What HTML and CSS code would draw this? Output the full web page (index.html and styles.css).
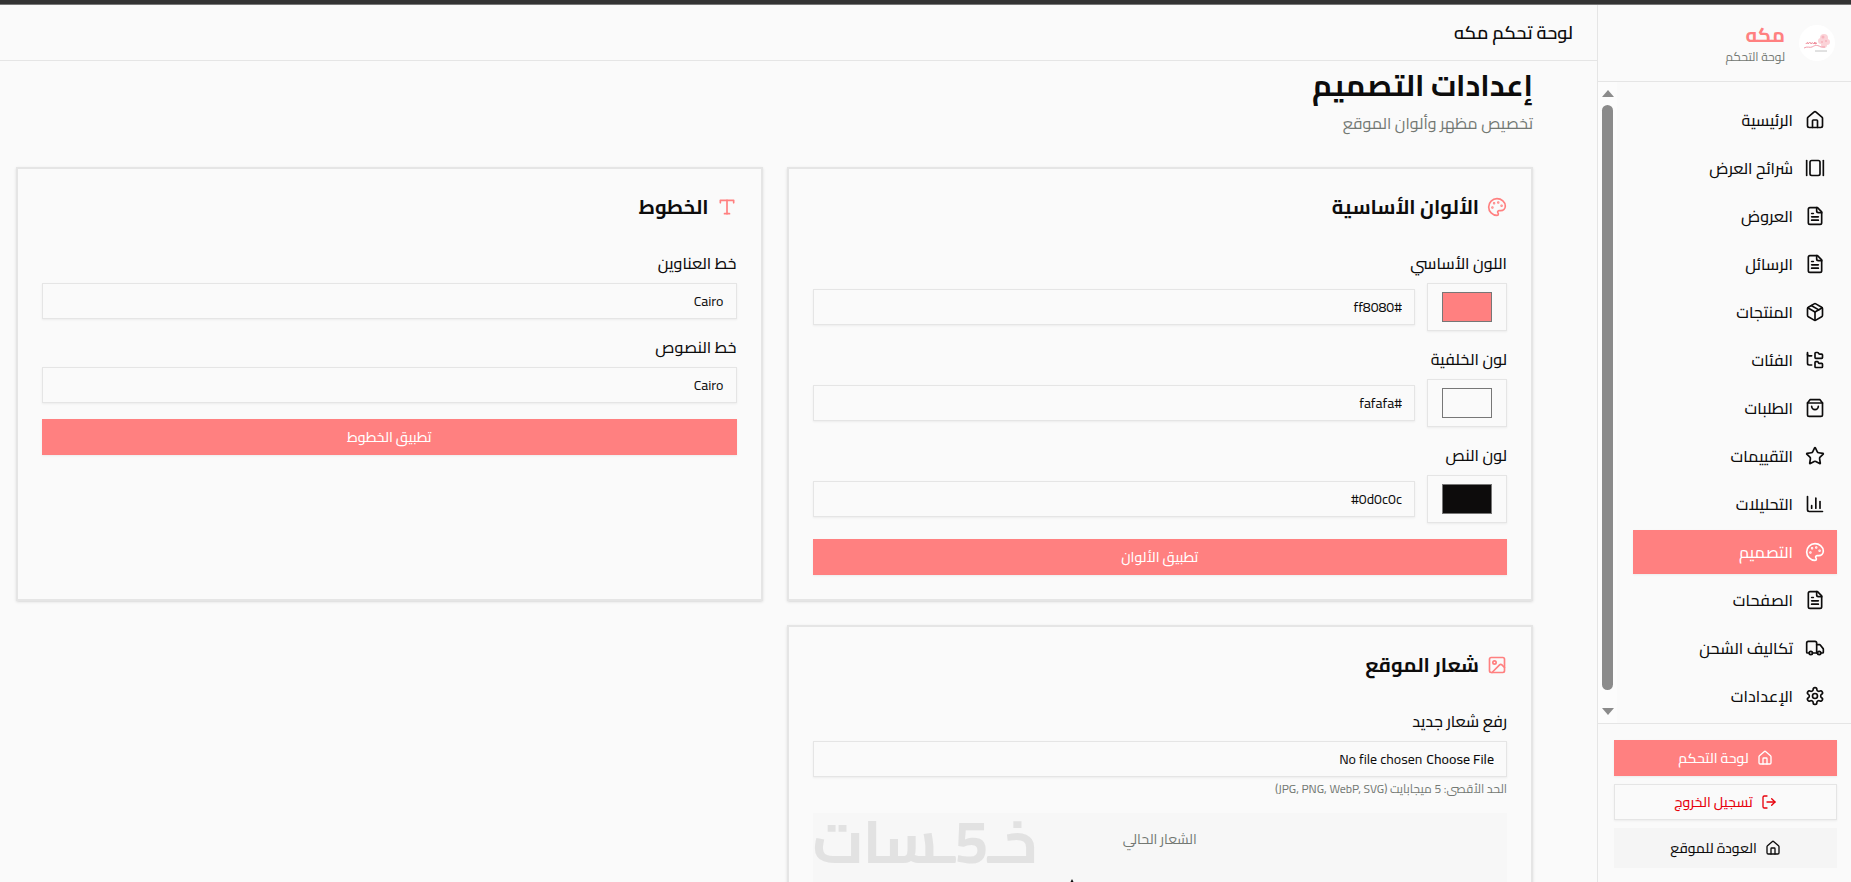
FILE: index.html
```html
<!DOCTYPE html>
<html lang="ar" dir="rtl">
<head>
<meta charset="utf-8">
<title>لوحة تحكم مكه</title>
<link rel="stylesheet" href="styles.css">
</head>
<body>
<svg class="sprite" aria-hidden="true">
  <symbol id="house" viewBox="0 0 24 24"><path d="M15 21v-8a1 1 0 0 0-1-1h-4a1 1 0 0 0-1 1v8"/><path d="M3 10a2 2 0 0 1 .709-1.528l7-5.999a2 2 0 0 1 2.582 0l7 5.999A2 2 0 0 1 21 10v9a2 2 0 0 1-2 2H5a2 2 0 0 1-2-2z"/></symbol>
  <symbol id="slides" viewBox="0 0 24 24"><path d="M2 3v18"/><rect width="12" height="18" x="6" y="3" rx="2"/><path d="M22 3v18"/></symbol>
  <symbol id="file" viewBox="0 0 24 24"><path d="M15 2H6a2 2 0 0 0-2 2v16a2 2 0 0 0 2 2h12a2 2 0 0 0 2-2V7Z"/><path d="M14 2v4a2 2 0 0 0 2 2h4"/><path d="M10 9H8"/><path d="M16 13H8"/><path d="M16 17H8"/></symbol>
  <symbol id="box" viewBox="0 0 24 24"><path d="M11 21.73a2 2 0 0 0 2 0l7-4A2 2 0 0 0 21 16V8a2 2 0 0 0-1-1.73l-7-4a2 2 0 0 0-2 0l-7 4A2 2 0 0 0 3 8v8a2 2 0 0 0 1 1.73z"/><path d="M12 22V12"/><path d="m3.3 7 8.7 5 8.7-5"/><path d="m7.5 4.27 9 5.15"/></symbol>
  <symbol id="tree" viewBox="0 0 24 24"><path d="M20 10a1 1 0 0 0 1-1V6a1 1 0 0 0-1-1h-2.5a1 1 0 0 1-.8-.4l-.9-1.2A1 1 0 0 0 15 3h-2a1 1 0 0 0-1 1v5a1 1 0 0 0 1 1Z"/><path d="M20 21a1 1 0 0 0 1-1v-3a1 1 0 0 0-1-1h-2.900a1 1 0 0 1-.88-.55l-.42-.85a1 1 0 0 0-.92-.6H13a1 1 0 0 0-1 1v5a1 1 0 0 0 1 1Z"/><path d="M3 5a2 2 0 0 0 2 2h3"/><path d="M3 3v13a2 2 0 0 0 2 2h3"/></symbol>
  <symbol id="bag" viewBox="0 0 24 24"><path d="M6 2 3 6v14a2 2 0 0 0 2 2h14a2 2 0 0 0 2-2V6l-3-4Z"/><path d="M3 6h18"/><path d="M16 10a4 4 0 0 1-8 0"/></symbol>
  <symbol id="star" viewBox="0 0 24 24"><path d="M11.525 2.295a.53.53 0 0 1 .95 0l2.310 4.679a2.123 2.123 0 0 0 1.595 1.160l5.166.756a.53.53 0 0 1 .294.904l-3.736 3.638a2.123 2.123 0 0 0-.611 1.878l.882 5.140a.53.53 0 0 1-.771.560l-4.618-2.428a2.122 2.122 0 0 0-1.973 0L6.396 21.010a.53.53 0 0 1-.770-.560l.881-5.139a2.122 2.122 0 0 0-.611-1.879L2.160 9.795a.53.53 0 0 1 .294-.906l5.165-.755a2.122 2.122 0 0 0 1.597-1.160z"/></symbol>
  <symbol id="chart" viewBox="0 0 24 24"><path d="M3 3v16a2 2 0 0 0 2 2h16"/><path d="M18 17V9"/><path d="M13 17V5"/><path d="M8 17v-3"/></symbol>
  <symbol id="palette" viewBox="0 0 24 24"><circle cx="13.500" cy="6.500" r=".5" fill="currentColor"/><circle cx="17.500" cy="10.500" r=".5" fill="currentColor"/><circle cx="8.500" cy="7.500" r=".5" fill="currentColor"/><circle cx="6.500" cy="12.500" r=".5" fill="currentColor"/><path d="M12 2C6.500 2 2 6.500 2 12s4.500 10 10 10c.926 0 1.648-.746 1.648-1.688 0-.437-.180-.835-.437-1.125-.290-.289-.438-.652-.438-1.125a1.640 1.640 0 0 1 1.668-1.668h1.996c3.051 0 5.555-2.503 5.555-5.554C21.965 6.012 17.461 2 12 2z"/></symbol>
  <symbol id="truck" viewBox="0 0 24 24"><path d="M14 18V6a2 2 0 0 0-2-2H4a2 2 0 0 0-2 2v11a1 1 0 0 0 1 1h2"/><path d="M15 18H9"/><path d="M19 18h2a1 1 0 0 0 1-1v-3.650a1 1 0 0 0-.22-.624l-3.480-4.350A1 1 0 0 0 17.520 8H14"/><circle cx="17" cy="18" r="2"/><circle cx="7" cy="18" r="2"/></symbol>
  <symbol id="gear" viewBox="0 0 24 24"><path d="M12.220 2h-.44a2 2 0 0 0-2 2v.18a2 2 0 0 1-1 1.730l-.43.25a2 2 0 0 1-2 0l-.15-.08a2 2 0 0 0-2.730.73l-.22.38a2 2 0 0 0 .73 2.730l.15.1a2 2 0 0 1 1 1.720v.51a2 2 0 0 1-1 1.740l-.15.09a2 2 0 0 0-.73 2.730l.22.38a2 2 0 0 0 2.730.73l.15-.08a2 2 0 0 1 2 0l.43.25a2 2 0 0 1 1 1.730V20a2 2 0 0 0 2 2h.44a2 2 0 0 0 2-2v-.18a2 2 0 0 1 1-1.730l.43-.25a2 2 0 0 1 2 0l.15.08a2 2 0 0 0 2.730-.73l.22-.39a2 2 0 0 0-.73-2.730l-.15-.08a2 2 0 0 1-1-1.740v-.5a2 2 0 0 1 1-1.740l.15-.09a2 2 0 0 0 .73-2.730l-.22-.38a2 2 0 0 0-2.730-.73l-.15.08a2 2 0 0 1-2 0l-.43-.25a2 2 0 0 1-1-1.730V4a2 2 0 0 0-2-2z"/><circle cx="12" cy="12" r="3"/></symbol>
  <symbol id="logout" viewBox="0 0 24 24"><path d="M9 21H5a2 2 0 0 1-2-2V5a2 2 0 0 1 2-2h4"/><path d="m16 17 5-5-5-5"/><path d="M21 12H9"/></symbol>
  <symbol id="type" viewBox="0 0 24 24"><path d="M4 7V4h16v3"/><path d="M9 20h6"/><path d="M12 4v16"/></symbol>
  <symbol id="image" viewBox="0 0 24 24"><rect width="18" height="18" x="3" y="3" rx="2"/><circle cx="9" cy="9" r="2"/><path d="m21 15-3.086-3.086a2 2 0 0 0-2.828 0L6 21"/></symbol>
</svg>

<div class="window-edge"></div>
<div class="app">
  <aside class="sidebar">
    <div class="brand">
      <svg class="avatar" viewBox="0 0 40 40" aria-hidden="true">
        <circle cx="20" cy="20" r="18" fill="#fff"/>
        <g fill="#fbd3d8"><circle cx="27" cy="15" r="4"/><circle cx="30" cy="19" r="3"/><circle cx="24" cy="18" r="3"/><circle cx="27" cy="22" r="3"/></g>
        <g fill="#f7b3bd"><circle cx="26" cy="14" r="1.500"/><circle cx="29" cy="18" r="1"/><circle cx="25" cy="19" r="1"/></g>
        <path d="M9 21c1-2 2-2 2 0 1-2 3-2 3 0 1-2 2-1 3 0l1-2v2l2-1" fill="none" stroke="#ee7f8f"/>
        <path d="M7 25c3-2 6 0 8-1s4-3 9 0h4" fill="none" stroke="#f29dab"/>
        <path d="M18 28h12" stroke="#c4c4c4"/>
      </svg>
      <div>
        <div class="brand-name">مكه</div>
        <div class="brand-sub">لوحة التحكم</div>
      </div>
    </div>
    <div class="nav-area">
      <nav class="nav">
        <a href="#"><svg class="icon"><use href="#house"/></svg>الرئيسية</a>
        <a href="#"><svg class="icon"><use href="#slides"/></svg>شرائح العرض</a>
        <a href="#"><svg class="icon"><use href="#file"/></svg>العروض</a>
        <a href="#"><svg class="icon"><use href="#file"/></svg>الرسائل</a>
        <a href="#"><svg class="icon"><use href="#box"/></svg>المنتجات</a>
        <a href="#"><svg class="icon"><use href="#tree"/></svg>الفئات</a>
        <a href="#"><svg class="icon"><use href="#bag"/></svg>الطلبات</a>
        <a href="#"><svg class="icon"><use href="#star"/></svg>التقييمات</a>
        <a href="#"><svg class="icon"><use href="#chart"/></svg>التحليلات</a>
        <a href="#" class="active" aria-current="page"><svg class="icon"><use href="#palette"/></svg>التصميم</a>
        <a href="#"><svg class="icon"><use href="#file"/></svg>الصفحات</a>
        <a href="#"><svg class="icon"><use href="#truck"/></svg>تكاليف الشحن</a>
        <a href="#"><svg class="icon"><use href="#gear"/></svg>الإعدادات</a>
      </nav>
      <div class="scroll-track" aria-hidden="true">
        <span class="arrow up"></span><span class="thumb"></span><span class="arrow down"></span>
      </div>
    </div>
    <div class="side-actions">
      <button type="button" class="btn primary"><svg class="icon small"><use href="#house"/></svg>لوحة التحكم</button>
      <button type="button" class="btn outline"><svg class="icon small"><use href="#logout"/></svg>تسجيل الخروج</button>
      <button type="button" class="btn subtle"><svg class="icon small"><use href="#house"/></svg>العودة للموقع</button>
    </div>
  </aside>

  <div class="page">
    <header class="topbar">لوحة تحكم مكه</header>
    <main class="content">
      <h1>إعدادات التصميم</h1>
      <p class="lead">تخصيص مظهر وألوان الموقع</p>
      <div class="cards">
        <section class="card">
          <h2><svg class="icon"><use href="#palette"/></svg>الألوان الأساسية</h2>
          <div class="field">
            <label for="c1">اللون الأساسي</label>
            <div class="color-row"><input type="color" id="c1" value="#ff8080"><input type="text" class="input" aria-label="اللون الأساسي" value="#ff8080"></div>
          </div>
          <div class="field">
            <label for="c2">لون الخلفية</label>
            <div class="color-row"><input type="color" id="c2" value="#fafafa"><input type="text" class="input" aria-label="لون الخلفية" value="#fafafa"></div>
          </div>
          <div class="field">
            <label for="c3">لون النص</label>
            <div class="color-row"><input type="color" id="c3" value="#0d0c0c"><input type="text" class="input" aria-label="لون النص" value="#0d0c0c"></div>
          </div>
          <button type="button" class="btn primary">تطبيق الألوان</button>
        </section>
        <section class="card">
          <h2><svg class="icon"><use href="#type"/></svg>الخطوط</h2>
          <div class="field"><label for="f1">خط العناوين</label><input type="text" class="input" id="f1" value="Cairo"></div>
          <div class="field"><label for="f2">خط النصوص</label><input type="text" class="input" id="f2" value="Cairo"></div>
          <button type="button" class="btn primary">تطبيق الخطوط</button>
        </section>
        <section class="card">
          <h2><svg class="icon"><use href="#image"/></svg>شعار الموقع</h2>
          <div class="field tight"><label for="logo">رفع شعار جديد</label><input type="file" class="input" id="logo"></div>
          <p class="hint">الحد الأقصى: 5 ميجابايت (JPG, PNG, WebP, SVG)</p>
          <div class="preview">
            <span class="preview-label">الشعار الحالي</span>
            <svg class="preview-logo" viewBox="0 0 192 80" aria-hidden="true"><path d="M8 0l2 4-2 4-2-4z" fill="#0d0c0c"/></svg>
            <span class="watermark">خـ5ـسات</span>
          </div>
        </section>
      </div>
    </main>
  </div>
</div>
</body>
</html>
```
FILE: styles.css
```css
:root {
  --bg: #fafafa;
  --text: #0d0c0c;
  --muted: #737873;
  --line: #e5e5e5;
  --primary: #ff8080;
  --shadow: 0 1px 2px rgba(0, 0, 0, .06);
  --card-shadow: 0 1px 3px rgba(0, 0, 0, .1), 0 1px 2px -1px rgba(0, 0, 0, .1);
}
* { box-sizing: border-box; margin: 0; }
body {
  height: 100vh;
  overflow: hidden;
  display: flex;
  flex-direction: column;
  background: var(--bg);
  color: var(--text);
  font: 16px/24px Cairo, Roboto, "DejaVu Sans", sans-serif;
}
button, input { font: inherit; color: inherit; }
.sprite { position: absolute; width: 0; height: 0; }
.window-edge { flex: none; height: 5px; background: #333; border-bottom: 1px solid #777; }
.app { flex: 1; min-height: 0; display: flex; }
.icon { flex: none; width: 20px; height: 20px; fill: none; stroke: currentColor; stroke-width: 2; stroke-linecap: round; stroke-linejoin: round; }
.icon.small { width: 16px; height: 16px; }

.sidebar { flex: none; width: 254px; display: flex; flex-direction: column; border-left: 1px solid var(--line); }
.brand { display: flex; align-items: center; gap: 12px; height: 77px; padding: 0 14px; border-bottom: 1px solid var(--line); }
.avatar { width: 40px; height: 40px; }
.brand-name { font-size: 20px; font-weight: 700; line-height: 28px; color: var(--primary); }
.brand-sub { font-size: 12px; line-height: 16px; color: var(--muted); }
.nav-area { flex: 1; min-height: 0; display: flex; overflow: hidden; }
.nav { flex: 1; display: flex; flex-direction: column; gap: 4px; padding: 16px 14px 16px 16px; }
.nav a { flex: none; display: flex; align-items: center; gap: 12px; height: 44px; padding: 0 12px; color: inherit; text-decoration: none; font-weight: 500; }
.nav a.active { background: var(--primary); color: #fff; box-shadow: var(--shadow); }
.scroll-track { width: 19px; display: flex; flex-direction: column; align-items: center; gap: 8px; padding: 8px 0; background: #fcfcfc; }
.thumb { flex: 1; width: 11px; border-radius: 6px; background: #8b8b8b; margin-bottom: 10px; }
.arrow { border: 6px solid transparent; border-block-width: 0; }
.arrow.up { border-bottom: 7px solid #8b8b8b; }
.arrow.down { border-top: 7px solid #8b8b8b; }
.side-actions { display: flex; flex-direction: column; gap: 8px; padding: 16px 14px 14px 16px; border-top: 1px solid var(--line); }

.btn { display: flex; align-items: center; justify-content: center; gap: 8px; width: 100%; height: 36px; border: 0; font-size: 14px; font-weight: 500; }
.primary { background: var(--primary); color: #fff; box-shadow: var(--shadow); }
.outline { background: var(--bg); border: 1px solid var(--line); color: #e7000b; box-shadow: var(--shadow); }
.subtle { height: 40px; background: #f5f5f5; }

.page { flex: 1; min-width: 0; display: flex; flex-direction: column; }
.topbar { flex: none; height: 56px; padding: 0 24px; border-bottom: 1px solid var(--line); font-size: 18px; font-weight: 600; line-height: 55px; }
.content { flex: 1; min-height: 0; overflow: hidden; padding: 6px 64px 0 16px; }
h1 { font-size: 30px; line-height: 36px; font-weight: 700; }
.lead { margin-top: 8px; color: var(--muted); }
.cards { display: grid; grid-template-columns: 1fr 1fr; gap: 24px; margin-top: 32px; }
.card { min-width: 0; padding: 24px; border: 2px solid var(--line); box-shadow: var(--card-shadow); }
h2 { display: flex; align-items: center; gap: 8px; margin-bottom: 30px; font-size: 20px; line-height: 28px; font-weight: 700; }
h2 .icon { color: var(--primary); }
.field { margin-bottom: 16px; }
.field.tight { margin-bottom: 4px; }
.field label { display: block; margin-bottom: 8px; font-weight: 500; }
.color-row { display: flex; align-items: center; gap: 12px; }
input[type="color"] { flex: none; width: 80px; height: 48px; padding: 4px 12px; border: 1px solid var(--line); background: var(--bg); box-shadow: var(--shadow); }
.input { display: block; width: 100%; min-width: 0; height: 36px; padding: 4px 12px; border: 1px solid var(--line); border-radius: 0; background: var(--bg); font-size: 14px; line-height: 24px; box-shadow: var(--shadow); }
.input[type="file"] { padding-top: 5px; }
.input::file-selector-button { padding: 0; border: 0; background: transparent; font: inherit; font-weight: 500; color: inherit; }
.hint { font-size: 12px; line-height: 16px; color: var(--muted); }
.preview { position: relative; display: flex; flex-direction: column; align-items: center; gap: 28px; margin-top: 16px; padding: 14px 16px; background: #f7f7f7; }
.preview-label { font-size: 14px; line-height: 24px; color: var(--muted); }
.preview-logo { width: 192px; height: 80px; }
/* Watermark lies over the preview's corner */
.watermark { position: absolute; left: 0; top: 0; color: #e2e2e2; font-size: 60px; font-weight: 700; line-height: 56px; }
```
